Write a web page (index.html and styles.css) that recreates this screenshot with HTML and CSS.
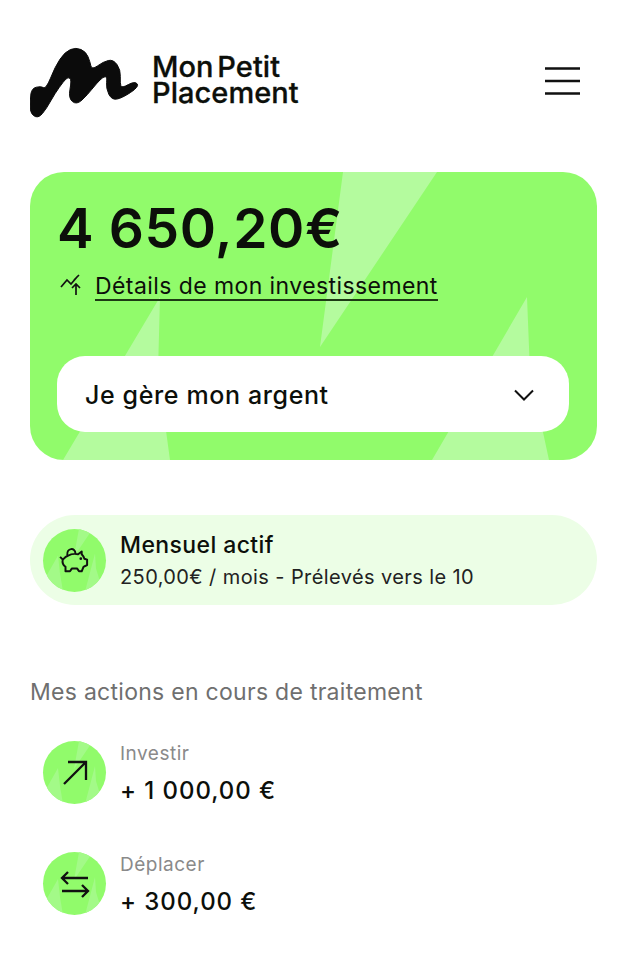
FILE: index.html
```html
<!DOCTYPE html>
<html lang="fr">
<head>
<meta charset="utf-8">
<title>Mon Petit Placement</title>
<link rel="stylesheet" href="styles.css">
</head>
<body>
<header class="header">
  <div class="brand">
    <svg class="logo" width="112" height="72" viewBox="0 0 112 72"><path d="M.4 53Q-1 65 3.500 68.500Q8 72 12.400 66.600Q16.700 61.300 20.800 53.800Q25 46.300 29.200 40.500Q33.300 34.700 35.800 32.200Q38.300 29.700 40 31.400Q41.700 33 40 42.200Q38.300 51.300 42.500 54.600Q46.700 58 52 53Q57.300 48 62 42.100Q66.700 36.300 70 33Q73.300 29.700 75.300 29.700Q77.300 29.700 76.600 35.500Q76 41.300 78.800 47.200Q81.700 53 86.700 52.100Q91.700 51.300 100.500 45.500Q109.300 39.700 107.200 36.900Q105 34 98.300 37.600Q91.700 41.300 90.900 38.800Q90 36.300 90.300 29.600Q90.700 23 87 17.600Q83.300 12.300 78.300 13.500Q73.300 14.700 67.500 18.900Q61.700 23 60.900 18.900Q60 14.700 58 9.700Q56 4.700 51 2.500Q46 .3 40.500 2.500Q35 4.700 30 12.200Q25 19.700 20.500 31.200Q16 42 13.500 40.600Q11 39 6.400 40.200Q1.700 41.300 .9 47Z" fill="#0b0b0b" stroke="#0b0b0b" stroke-width="1"/></svg>
    <div class="brand-name">Mon Petit<br>Placement</div>
  </div>
  <svg class="burger" width="36" height="30" viewBox="0 0 36 30"><path d="M0 2.500H35M0 15H35M0 27.500H35" stroke="#111" stroke-width="2.500"/></svg>
</header>

<section class="card">
  <svg class="card-bg" width="567" height="288" viewBox="0 0 567 288"><path d="M313 0H407L290 175Z M130 125L33 288H140L128 200Z M497 125L402 288H519L500 200Z" fill="#b4fb9e"/></svg>
  <div class="amount">4 650,20€</div>
  <div class="details">
    <svg class="details-icon" width="26" height="24" viewBox="0 0 26 24"><path d="M2 13L8 6L12 10L18 3M20 1L15 6M17 21V11M13 14L17 10L21 14" fill="none" stroke="#111" stroke-width="1.700"/></svg>
    <a class="details-link" href="#">Détails de mon investissement</a>
  </div>
  <div class="select">
    <span>Je gère mon argent</span>
    <svg width="20" height="12" viewBox="0 0 20 12"><path d="M1 1.500L10 10.500L19 1.500" fill="none" stroke="#111" stroke-width="2"/></svg>
  </div>
</section>

<section class="pill">
  <div class="badge">
    <svg width="31" height="27" viewBox="0 0 34 30"><path d="M1 11L4 14C3 18 4 20 7 22L7 27L12 27L14 24L20 24L22 27L25 27L27 22L31 20L31 14L28 13C27 10 26 9 25 8L25 5L21 8C17 7 10 8 4 14M9 9C8 1 18 0 18 7" fill="none" stroke="#111" stroke-width="2.200" stroke-linejoin="round"/><circle cx="24" cy="13" r="1.500" fill="#111"/></svg>
  </div>
  <div class="pill-text">
    <div class="pill-title">Mensuel actif</div>
    <div class="pill-sub">250,00€ / mois - Prélevés vers le 10</div>
  </div>
</section>

<h2 class="section-title">Mes actions en cours de traitement</h2>

<div class="action">
  <div class="badge">
    <svg width="28" height="28" viewBox="0 0 28 28"><path d="M3 25L25 3M7 3H25V21" fill="none" stroke="#111" stroke-width="2.300"/></svg>
  </div>
  <div class="action-text">
    <div class="action-label">Investir</div>
    <div class="action-value">+ 1 000,00 €</div>
  </div>
</div>

<div class="action">
  <div class="badge">
    <svg width="30" height="28" viewBox="0 0 30 28"><path d="M28 8H2M8 2L2 8L8 14M2 21H28M22 15L28 21L22 27" fill="none" stroke="#111" stroke-width="2.300"/></svg>
  </div>
  <div class="action-text">
    <div class="action-label">Déplacer</div>
    <div class="action-value">+ 300,00 €</div>
  </div>
</div>
</body>
</html>
```
FILE: styles.css
```css
* { box-sizing: border-box; }
html, body { margin: 0; padding: 0; }
body {
  padding: 44px 39px 0 30px;
  font-family: Inter, "Liberation Sans", sans-serif;
  color: #0c0f0a;
  background: #fff;
}
.header {
  display: flex;
  align-items: center;
  justify-content: space-between;
  height: 72px;
  padding-right: 16px;
}
.brand { display: flex; align-items: center; gap: 10px; }
.logo { display: block; margin-top: 5px; }
.brand-name {
  font-size: 29px;
  font-weight: 500;
  line-height: 26px;
  letter-spacing: .05px;
  word-spacing: -4px;
  -webkit-text-stroke: .3px #0c0f0a;
}
.burger { margin-top: 2px; }
.card {
  position: relative;
  overflow: hidden;
  margin-top: 56px;
  height: 288px;
  padding: 24px 28px 28px 27px;
  border-radius: 34px;
  background: #91fb6b;
  display: flex;
  flex-direction: column;
}
.card-bg { position: absolute; left: 0; top: 0; }
.amount, .details, .select { position: relative; }
.amount {
  font-size: 55px;
  font-weight: 600;
  line-height: 64px;
  letter-spacing: .6px;
}
.details {
  display: flex;
  align-items: center;
  gap: 10px;
  margin-top: 11px;
  padding-left: 2px;
}
.details-link {
  font-size: 23px;
  line-height: 26px;
  font-weight: 400;
  letter-spacing: .42px;
  color: inherit;
  text-decoration: none;
  border-bottom: 2px solid #1d3a14;
  margin-top: 2px;
}
.select {
  margin-top: auto;
  height: 76px;
  border-radius: 28px;
  background: #fff;
  display: flex;
  align-items: center;
  justify-content: space-between;
  padding: 1px 35px 0 28px;
  font-size: 25px;
  font-weight: 500;
  letter-spacing: .62px;
}
.pill {
  display: flex;
  align-items: center;
  gap: 14px;
  height: 90px;
  margin-top: 55px;
  padding-left: 13px;
  border-radius: 45px;
  background: #ecfee6;
}
.pill-text { padding-top: 2px; }
.badge {
  position: relative;
  overflow: hidden;
  width: 63px;
  height: 63px;
  flex: none;
  border-radius: 50%;
  display: flex;
  align-items: center;
  justify-content: center;
  background: #91fb6b;
}
.badge::before {
  content: "";
  position: absolute;
  inset: 0;
  background: #a3fa88;
  clip-path: path("M36 0H50L31 28Z M15 27L2 50L17 63H20L17 45Z M52 25L42 63H60L53 40Z");
}
.badge svg { position: relative; }
.pill-title { font-size: 23px; font-weight: 500; line-height: 30px; letter-spacing: .4px; }
.pill-sub { font-size: 20px; line-height: 30px; letter-spacing: .4px; margin-top: 2px; color: #222; }
.section-title {
  margin: 72px 0 0;
  font-size: 23px;
  font-weight: 400;
  line-height: 30px;
  letter-spacing: .28px;
  color: #6f6f6f;
}
.action {
  display: flex;
  align-items: flex-start;
  gap: 14px;
  margin-top: 47px;
  padding-left: 13px;
}
.section-title + .action { margin-top: 34px; }
.action-text { padding-top: 2px; }
.action-label { font-size: 19px; line-height: 22px; letter-spacing: .5px; color: #8a8a8a; }
.action-value { font-size: 24px; font-weight: 500; line-height: 28px; letter-spacing: .95px; margin-top: 12px; }
```
